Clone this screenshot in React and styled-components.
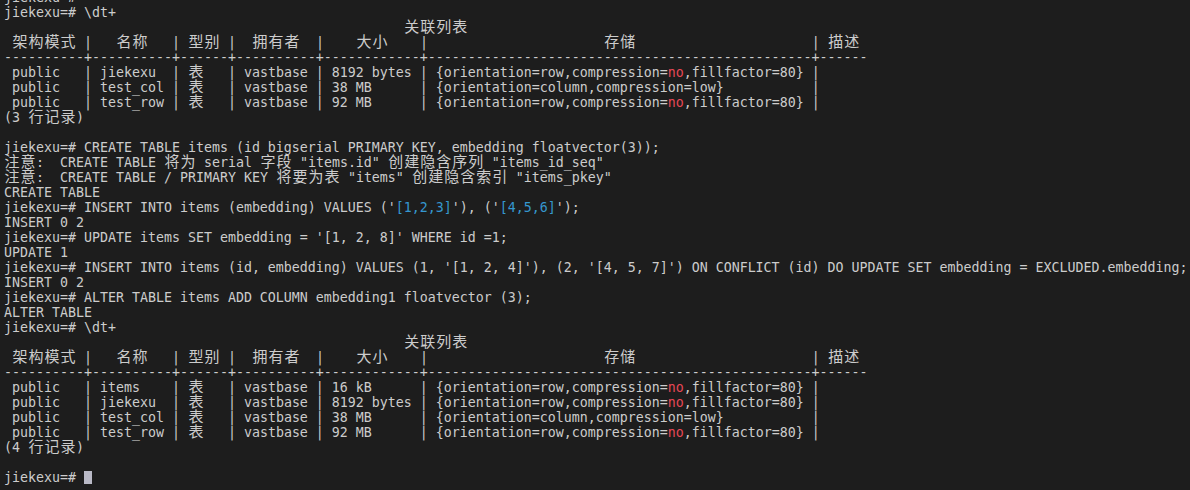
import styled, { createGlobalStyle } from "styled-components";

const Global = createGlobalStyle`
  html, body {
    margin: 0;
    padding: 0;
    background: #1d1d1d;
  }
`;

const Terminal = styled.div`
  height: 490px;
  box-sizing: border-box;
  overflow: hidden;
  display: flex;
  flex-direction: column;
  justify-content: flex-end;
  padding: 0 0 5px 4px;
  background: #1d1d1d;
  color: #cccccc;
  font-family: "DejaVu Sans Mono", "Liberation Mono", monospace;
  font-size: 13.29px;
`;

const Line = styled.div`
  flex: none;
  height: 15px;
  line-height: 15px;
  white-space: pre;
`;

// CJK glyphs take two terminal cells
const Wide = styled.span`
  display: inline-block;
  width: 16px;
  text-align: center;
  font-family: "Noto Sans CJK SC", "Noto Sans", sans-serif;
  font-size: 15px;
  line-height: 0;
  vertical-align: baseline;
`;

const Ink = styled.span`
  color: ${(p) => (p.$tone === "red" ? "#e74856" : p.$tone === "cyan" ? "#3597cf" : "inherit")};
`;

const Cursor = styled.span`
  display: inline-block;
  width: 8px;
  height: 13px;
  margin-top: 1px;
  vertical-align: top;
  background: #b9b9c6;
`;

const isWide = (c) => /[\u2e80-\u9fff\uff00-\uffef]/.test(c);
const dw = (s) => [...s].reduce((n, c) => n + (isWide(c) ? 2 : 1), 0);
const padR = (s, w) => s + " ".repeat(Math.max(0, w - dw(s)));
const center = (s, w) => {
  const t = w - dw(s);
  const l = Math.floor(t / 2);
  return " ".repeat(l) + s + " ".repeat(t - l);
};

function Text({ text, tone }) {
  const out = [];
  let run = "";
  [...text].forEach((c, i) => {
    if (isWide(c)) {
      if (run) out.push(run);
      run = "";
      out.push(<Wide key={i}>{c}</Wide>);
    } else {
      run += c;
    }
  });
  if (run) out.push(run);
  return tone ? <Ink $tone={tone}>{out}</Ink> : <>{out}</>;
}

// parts: [text, tone]
const seg = (s, tone) => [s, tone];

function storageParts(orientation, compression, fill) {
  const parts = [seg("{orientation=" + orientation + ",compression=")];
  let len = 13 + orientation.length + 13;
  parts.push(seg(compression, compression === "no" ? "red" : undefined));
  len += compression.length;
  const tail = (fill ? ",fillfactor=" + fill : "") + "}";
  parts.push(seg(tail));
  len += tail.length;
  parts.push(seg(" ".repeat(46 - len)));
  return parts;
}

const title = [seg(" ".repeat(50) + "关联列表")];
const header = [
  seg(
    " " + center("架构模式", 8) + " | " + center("名称", 8) + " | " + center("型别", 4) +
      " | " + center("拥有者", 8) + " | " + center("大小", 10) + " | " + center("存储", 46) + " | 描述"
  ),
];
const sep = [
  seg(["-".repeat(10), "-".repeat(10), "-".repeat(6), "-".repeat(10), "-".repeat(12), "-".repeat(48), "-".repeat(6)].join("+")),
];

const row = (name, size, orientation, compression, fill) => [
  seg(" " + padR("public", 8) + " | " + padR(name, 8) + " | " + padR("表", 4) + " | " + padR("vastbase", 8) + " | " + padR(size, 10) + " | "),
  ...storageParts(orientation, compression, fill),
  seg(" | "),
];

const rowsA = [
  row("jiekexu", "8192 bytes", "row", "no", "80"),
  row("test_col", "38 MB", "column", "low"),
  row("test_row", "92 MB", "row", "no", "80"),
];

const rowsB = [row("items", "16 kB", "row", "no", "80"), ...rowsA];

const lines = [
  [seg("jiekexu=#")],
  [seg("jiekexu=# \\dt+")],
  title,
  header,
  sep,
  ...rowsA,
  [seg("(3 行记录)")],
  [seg("")],
  [seg("jiekexu=# CREATE TABLE items (id bigserial PRIMARY KEY, embedding floatvector(3));")],
  [seg('注意:  CREATE TABLE 将为 serial 字段 "items.id" 创建隐含序列 "items_id_seq"')],
  [seg('注意:  CREATE TABLE / PRIMARY KEY 将要为表 "items" 创建隐含索引 "items_pkey"')],
  [seg("CREATE TABLE")],
  [
    seg("jiekexu=# INSERT INTO items (embedding) VALUES ('"),
    seg("[1,2,3]", "cyan"),
    seg("'), ('"),
    seg("[4,5,6]", "cyan"),
    seg("');"),
  ],
  [seg("INSERT 0 2")],
  [seg("jiekexu=# UPDATE items SET embedding = '[1, 2, 8]' WHERE id =1;")],
  [seg("UPDATE 1")],
  [seg("jiekexu=# INSERT INTO items (id, embedding) VALUES (1, '[1, 2, 4]'), (2, '[4, 5, 7]') ON CONFLICT (id) DO UPDATE SET embedding = EXCLUDED.embedding;")],
  [seg("INSERT 0 2")],
  [seg("jiekexu=# ALTER TABLE items ADD COLUMN embedding1 floatvector (3);")],
  [seg("ALTER TABLE")],
  [seg("jiekexu=# \\dt+")],
  title,
  header,
  sep,
  ...rowsB,
  [seg("(4 行记录)")],
  [seg("")],
];

export default function App() {
  return (
    <>
      <Global />
      <Terminal>
        {lines.map((parts, i) => (
          <Line key={i}>
            {parts.map(([t, tone], j) => (
              <Text key={j} text={t} tone={tone} />
            ))}
          </Line>
        ))}
        <Line>
          jiekexu=# <Cursor />
        </Line>
      </Terminal>
    </>
  );
}
